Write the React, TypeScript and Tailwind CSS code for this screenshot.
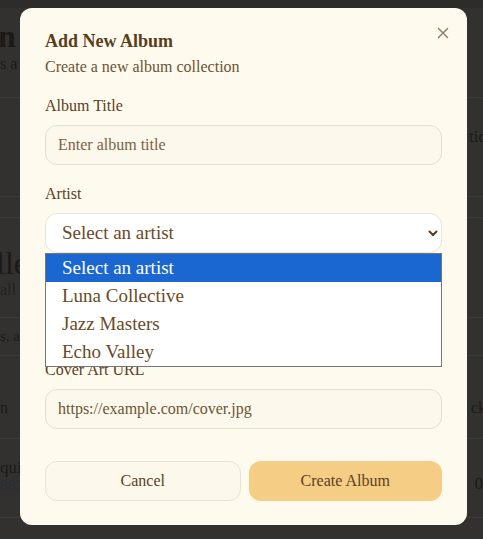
import React from "react";

const serif = { fontFamily: '"Liberation Serif", "DejaVu Serif", serif' };

function BgPage() {
  return (
    <div className="fixed inset-0 bg-[#323130] overflow-hidden text-[#1b1a19]" style={serif}>
      <div className="h-[8px] bg-[#2d2c2b]" />
      <div className="h-[90px] border-b border-[#3b3a39] flex flex-col pt-[10px]">
        <div className="flex justify-between">
          <span className="text-[32px] font-bold leading-[36px] -ml-[2px]">n</span>
        </div>
        <div className="text-[16px] leading-[20px]">s a</div>
      </div>
      <div className="h-[99px] border-b border-[#3b3a39] flex items-start justify-end pt-[26px]">
        <span className="text-[17px] -mr-[4px]">tio</span>
      </div>
      <div className="h-[21px] border-b border-[#3b3a39]" />
      <div className="h-[100px] border-b border-[#3b3a39] flex flex-col pt-[28px]">
        <span className="text-[32px] leading-[34px] -ml-[4px]">lle</span>
        <span className="text-[16px] leading-[20px] text-[#232221]">all a</span>
      </div>
      <div className="h-[38px] border-b border-[#3b3a39] flex items-center">
        <span className="text-[15px]">s, a</span>
      </div>
      <div className="h-[83px] border-b border-[#3b3a39] flex items-end justify-between pb-[18px]">
        <span className="text-[16px]">n</span>
        <span className="text-[16px] -mr-[3px]">ck</span>
      </div>
      <div className="h-[79px] border-b border-[#3b3a39] flex justify-between pt-[20px]">
        <div className="flex flex-col leading-[18px]">
          <span className="text-[17px]">qui</span>
          <span className="text-[16px] text-[#2a2c33]">882</span>
        </div>
        <span className="text-[17px] pt-[12px]">0</span>
      </div>
    </div>
  );
}

function Chevron() {
  return (
    <svg width="12" height="12" viewBox="0 0 12 12" fill="none">
      <path d="M2.5 4.5 L6 8 L9.5 4.5" stroke="#5a3e1c" strokeWidth="2" strokeLinecap="round" />
    </svg>
  );
}

export default function App() {
  return (
    <div className="relative w-[483px] h-[539px]" style={serif}>
      <BgPage />
      <div className="absolute left-[20px] top-[8px] w-[447px] h-[517px] rounded-[12px] bg-[#fefaee] px-[25px] pt-[21px] text-[#5c4023]">
        <button className="absolute right-[16px] top-[17px] text-[#8b7a60]">
          <svg width="16" height="16" viewBox="0 0 16 16" fill="none">
            <path d="M3.5 3.5 L12.5 12.5 M12.5 3.5 L3.5 12.5" stroke="#8b7a60" strokeWidth="1.4" strokeLinecap="round" />
          </svg>
        </button>
        <h2 className="text-[18px] font-bold leading-[24px] text-[#5a3e1c]">Add New Album</h2>
        <p className="text-[16px] leading-[20px] mt-[4px] text-[#6b5433]">Create a new album collection</p>

        <div className="mt-[19px]">
          <label className="block text-[16px] leading-[20px]">Album Title</label>
          <div className="mt-[9px] h-[40px] rounded-[12px] border border-[#e6ddca] bg-[#fdf8ec] flex items-center px-[12px] text-[16px] text-[#7a6245]">
            Enter album title
          </div>
        </div>

        <div className="mt-[19px] relative">
          <label className="block text-[16px] leading-[20px]">Artist</label>
          <div className="mt-[9px] h-[40px] rounded-[12px] border border-[#e8e4de] bg-white flex items-center justify-between pl-[16px] pr-[2px] text-[19px] text-[#6b4a26]">
            <span>Select an artist</span>
            <Chevron />
          </div>
          <div className="absolute left-0 right-0 top-[69px] z-10 border border-[#767676] bg-white text-[19px] text-[#6b4a26]">
            <div className="h-[28px] bg-[#1a67d2] text-white flex items-center pl-[16px]">Select an artist</div>
            <div className="h-[28px] flex items-center pl-[16px]">Luna Collective</div>
            <div className="h-[28px] flex items-center pl-[16px]">Jazz Masters</div>
            <div className="h-[28px] flex items-center pl-[16px]">Echo Valley</div>
          </div>
        </div>

        <div className="mt-[107px]">
          <label className="block text-[16px] leading-[20px]">Cover Art URL</label>
          <div className="mt-[9px] h-[40px] rounded-[12px] border border-[#e6ddca] bg-[#fdf8ec] flex items-center px-[12px] text-[16px] text-[#6b5433]">
            https://example.com/cover.jpg
          </div>
        </div>

        <div className="mt-[32px] flex gap-[8px]">
          <button className="flex-1 h-[40px] rounded-[12px] border border-[#ebe2d0] bg-[#fdf8ec] text-[16px] text-[#5c4023]">Cancel</button>
          <button className="flex-1 h-[40px] rounded-[12px] bg-[#f5cd85] text-[16px] text-[#5c4023]">Create Album</button>
        </div>
      </div>
    </div>
  );
}
